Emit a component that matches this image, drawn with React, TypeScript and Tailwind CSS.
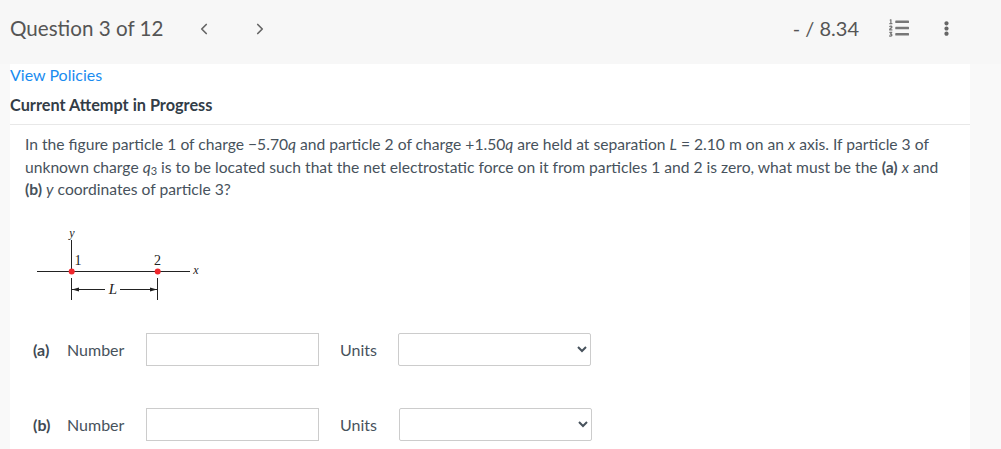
import { ChevronLeft, ChevronRight } from "lucide-react";
import { FaListOl, FaEllipsisV } from "react-icons/fa";

function Figure() {
  return (
    <svg width="170" height="84" viewBox="0 0 170 84" className="block">
      <g stroke="#222" strokeWidth="1" fill="none">
        <path d="M7 46.5H160" />
        <path d="M41.5 15V46" />
        <path d="M41.5 53V75" />
        <path d="M127.5 53V75" />
        <path d="M42 64.5H75" />
        <path d="M90 64.5H127" />
      </g>
      <path d="M42 64.5l7-2v4z" fill="#222" />
      <path d="M127 64.5l-7-2v4z" fill="#222" />
      <circle cx="41.7" cy="46.5" r="3" fill="#f0262c" />
      <circle cx="127.7" cy="46.5" r="3" fill="#f0262c" />
      <g fontFamily="'Liberation Serif', serif" fill="#222">
        <text x="42" y="12" fontSize="12" fontStyle="italic" textAnchor="middle">y</text>
        <text x="48" y="40" fontSize="14" textAnchor="middle">1</text>
        <text x="127.5" y="40" fontSize="14" textAnchor="middle">2</text>
        <text x="166" y="49" fontSize="12" fontStyle="italic" textAnchor="middle">x</text>
        <text x="83" y="69" fontSize="15" fontStyle="italic" textAnchor="middle">L</text>
      </g>
    </svg>
  );
}

function AnswerRow({ part, selectGap }: { part: string; selectGap: string }) {
  return (
    <div className="flex items-center h-[33px]">
      <span className="font-bold text-[#3f4a54] w-[34px] shrink-0">{part}</span>
      <span className="w-[79px] shrink-0">Number</span>
      <input type="text" className="w-[173px] h-[33px] border border-[#ccc] bg-white" />
      <span className="ml-[21px] w-[58px] shrink-0">Units</span>
      <select className={`w-[193px] h-[33px] border border-[#ccc] rounded-[2px] bg-white ${selectGap}`}>
        <option></option>
      </select>
    </div>
  );
}

export default function App() {
  return (
    <div className="w-[1001px] h-[449px] overflow-hidden bg-[#f9f9f9] text-[16px] text-[#47525c] font-['Lato','Noto_Sans',sans-serif]">
      <header className="h-16 bg-[#f7f7f7] flex items-center pl-[10px] pr-[47px] text-[#555]">
        <h1 className="text-[20.6px] leading-none -mt-[8px]">Question 3 of 12</h1>
        <ChevronLeft size={18} strokeWidth={2.25} className="ml-[32px] -mt-[7px] text-[#666]" />
        <ChevronRight size={18} strokeWidth={2.25} className="ml-[38px] -mt-[7px] text-[#666]" />
        <div className="ml-auto flex items-center -mt-[8px]">
          <span className="text-[20px] leading-none">- / 8.34</span>
          <FaListOl size={20} className="ml-[30px] text-[#777]" />
          <FaEllipsisV size={15} className="ml-[30px] text-[#666]" />
        </div>
      </header>
      <main className="ml-[10px] w-[960px] h-[385px] bg-white">
        <a className="block leading-[22px] text-[#1a8cf0]">View Policies</a>
        <div className="mt-[8px] h-[31px] border-b border-[#e8e8e8] text-[16.3px] font-bold text-[#333d47] leading-[22px]">
          Current Attempt in Progress
        </div>
        <p className="mt-[8px] ml-[15px] w-[920px] text-[15.65px] leading-[22.5px]">
          In the figure particle 1 of charge −5.70<i>q</i> and particle 2 of charge +1.50<i>q</i> are held at separation <i>L</i> = 2.10 m on an <i>x</i> axis. If particle 3 of unknown charge <i>q</i><sub className="text-[11px]">3</sub> is to be located such that the net electrostatic force on it from particles 1 and 2 is zero, what must be the <b>(a)</b> <i>x</i> and <b>(b)</b> <i>y</i> coordinates of particle 3?
        </p>
        <div className="mt-[24.5px] ml-[20px]">
          <Figure />
        </div>
        <div className="mt-[24px] ml-[23px] flex flex-col gap-[42px]">
          <AnswerRow part="(a)" selectGap="" />
          <AnswerRow part="(b)" selectGap="ml-[1px]" />
        </div>
      </main>
    </div>
  );
}
